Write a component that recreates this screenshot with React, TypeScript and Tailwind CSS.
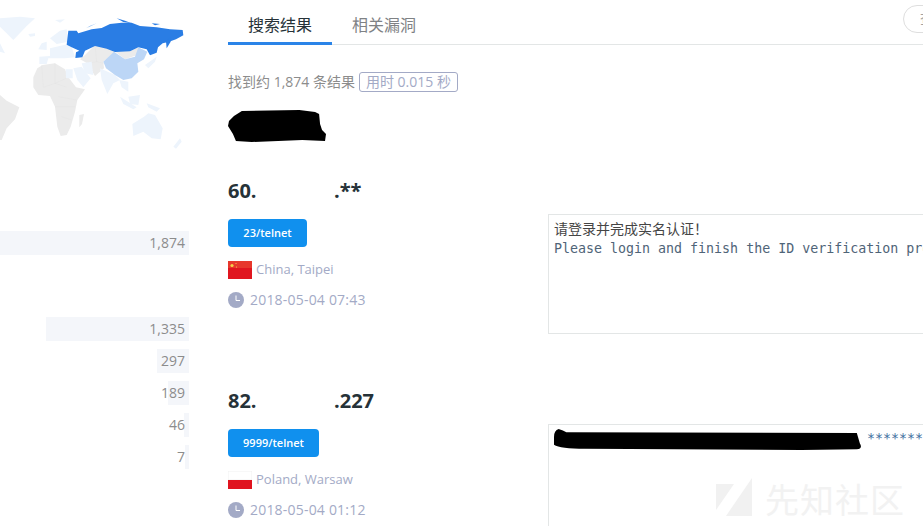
import React from "react";

const cjk = "font-['Open_Sans','Noto_Sans_CJK_SC',sans-serif]";

const bars = [
  { label: "1,335", width: "w-[143px]" },
  { label: "297", width: "w-[32px]" },
  { label: "189", width: "w-[21px]" },
  { label: "46", width: "w-[5px]" },
  { label: "7", width: "w-[4px]" },
];

function WorldMap() {
  return (
    <svg viewBox="0 0 660 480" className="block h-[160px] w-[220px]">
      {/* gray countries */}
      <g fill="#ebebeb">
        <path d="M100 232 L112 205 L128 195 L165 190 L195 208 L205 232 L228 262 L255 268 L232 300 L225 335 L212 380 L200 405 L182 408 L172 380 L165 320 L150 288 L115 285 L100 262 Z" />
        <path d="M0 285 L20 302 L58 322 L45 358 L20 385 L5 420 L0 420 Z" />
        <path d="M255 165 L285 135 L320 140 L345 155 L310 185 L312 205 L285 228 L262 190 L240 178 Z" />
        <path d="M342 152 L390 150 L415 142 L412 165 L375 178 Z" />
        <path d="M238 345 L252 342 L246 372 L238 382 Z" />
      </g>
      <g fill="none" stroke="#e0e0e0" strokeWidth="1">
        <path d="M125 195 L130 260 M165 190 L165 250 L200 262 M165 250 L130 262 M205 232 L165 250 M165 320 L225 320 M175 290 L230 300 M185 350 L215 360" />
        <path d="M285 135 L290 185 L262 190 M290 185 L312 190" />
      </g>
      {/* light countries */}
      <g fill="#edf4fc">
        <path d="M0 55 L60 50 L105 55 L80 78 L40 120 L20 100 L0 80 Z" />
        <path d="M85 102 L105 100 L105 108 L90 110 Z" />
        <path d="M165 60 L195 58 L180 68 Z" />
        <path d="M118 170 L150 168 L150 145 L205 132 L215 140 L225 172 L195 175 L145 175 L140 192 L118 192 Z" />
        <path d="M125 130 L140 125 L140 150 L115 148 Z" />
        <path d="M150 115 L180 92 L200 88 L205 125 L170 132 Z" />
        <path d="M197 208 L218 208 L218 235 L198 235 Z" />
        <path d="M220 205 L245 200 L272 235 L250 262 L232 240 Z" />
        <path d="M245 190 L275 185 L280 225 L255 220 Z" />
        <path d="M300 205 L345 225 L360 240 L340 250 L322 282 L305 240 Z" />
        <path d="M358 240 L385 245 L385 275 L365 262 Z" />
        <path d="M360 290 L410 322 L400 328 L370 312 Z" />
        <path d="M385 290 L420 285 L415 315 L390 312 Z" />
        <path d="M440 310 L480 325 L470 335 L445 322 Z" />
        <path d="M397 372 L432 350 L445 340 L465 345 L488 385 L482 418 L455 415 L430 395 L400 408 Z" />
        <path d="M520 440 L540 415 L545 425 L528 446 Z" />
        <path d="M435 195 L470 170 L465 185 L445 205 Z" />
        <path d="M0 130 L10 150 L15 160 L0 155 Z" />
      </g>
      {/* China */}
      <path
        fill="#bcd6f6"
        d="M310 185 L342 155 L375 178 L405 170 L415 142 L442 155 L432 178 L412 190 L415 215 L395 235 L370 240 L345 225 L318 205 Z"
      />
      {/* Russia */}
      <g fill="#2a7de4">
        <path d="M205 92 L230 92 L235 100 L275 88 L305 84 L330 72 L365 68 L395 68 L420 78 L470 82 L510 88 L548 90 L550 106 L528 118 L505 126 L488 130 L474 142 L470 158 L450 166 L440 148 L415 142 L390 154 L345 156 L320 146 L285 138 L255 152 L247 172 L226 174 L228 157 L238 152 L215 142 L200 134 Z" />
        <path d="M498 125 L510 112 L512 125 L500 145 Z" />
        <path d="M258 85 L290 70 L270 78 Z" />
        <path d="M350 55 L375 62 L395 70 L370 66 Z" />
        <path d="M455 70 L480 72 L465 76 Z" />
      </g>
    </svg>
  );
}

function Scribble({ d, className }: { d: string; className: string }) {
  return (
    <svg viewBox="0 0 100 32" preserveAspectRatio="none" className={className}>
      <path d={d} fill="#000" />
    </svg>
  );
}

function ClockIcon() {
  return (
    <svg viewBox="0 0 16 16" className="h-4 w-4 shrink-0">
      <circle cx="8" cy="8" r="8" fill="#a3aac6" />
      <path d="M8 3.5 V8.5 H12" fill="none" stroke="#fff" strokeWidth="1" />
    </svg>
  );
}

function FlagChina() {
  return (
    <svg viewBox="0 0 24 18" className="h-[18px] w-6 shrink-0">
      <rect width="24" height="18" fill="#e0161f" />
      <rect width="24" height="7" fill="#ee5a3a" opacity="0.5" />
      <circle cx="4" cy="4.5" r="1.6" fill="#f5d24a" />
      <circle cx="8" cy="2.5" r="0.6" fill="#f5d24a" />
      <circle cx="8.5" cy="6" r="0.6" fill="#f5d24a" />
    </svg>
  );
}

function FlagPoland() {
  return (
    <svg viewBox="0 0 24 18" className="h-[18px] w-6 shrink-0">
      <rect width="24" height="18" fill="#f1f1f1" />
      <rect x="0.5" y="0.5" width="23" height="8" fill="#fff" />
      <rect y="9" width="24" height="9" fill="#e0141f" />
    </svg>
  );
}

function ResultRow({
  head,
  tail,
  port,
  portWidth,
  flag,
  place,
  time,
  children,
}: {
  head: string;
  tail: string;
  port: string;
  portWidth: string;
  flag: React.ReactNode;
  place: string;
  time: string;
  children: React.ReactNode;
}) {
  return (
    <div className="flex h-[210px] shrink-0">
      <div className="w-[320px] shrink-0">
        <div className="flex h-[26px] items-center text-[20px] font-bold leading-[26px] text-[#263238]">
          <span className="w-[106px] shrink-0">{head}</span>
          <span>{tail}</span>
        </div>
        <div
          className={`mt-[15px] flex h-7 items-center justify-center rounded bg-[#1090ee] text-[11px] font-semibold text-white ${portWidth}`}
        >
          {port}
        </div>
        <div className="mt-[14px] flex h-[18px] items-center gap-1 text-[13px] text-[#a3aac6]">
          {flag}
          <span>{place}</span>
        </div>
        <div className="mt-[12px] flex h-[18px] items-center gap-1.5 text-sm tracking-[0.2px] text-[#a3aac6]">
          <ClockIcon />
          <span>{time}</span>
        </div>
      </div>
      <div className="mt-9 h-[120px] w-[500px] shrink-0 border border-[#e3e6e6] px-[5px] py-[4px]">{children}</div>
    </div>
  );
}

export default function App() {
  return (
    <div className={`relative flex h-[526px] w-[923px] overflow-hidden bg-white ${cjk}`}>
      <aside className="w-[228px] shrink-0">
        <WorldMap />
        <div className="mt-[71px] flex h-6 w-[189px] items-center justify-end bg-[#f4f6fa] pr-1 text-sm text-[#8c8c8c]">
          1,874
        </div>
        <div className="mt-[62px] flex w-[189px] flex-col gap-2">
          {bars.map((bar) => (
            <div key={bar.label} className="relative flex h-6 items-center justify-end pr-1 text-sm text-[#8c8c8c]">
              <div className={`absolute inset-y-0 right-0 bg-[#f4f6fa] ${bar.width}`} />
              <span className="relative">{bar.label}</span>
            </div>
          ))}
        </div>
      </aside>

      <main className="min-w-0 flex-1">
        <div className="relative flex h-[45px] border-b border-[#e3e6e6] text-base">
          <div className="flex h-[45px] w-[104px] items-center justify-center border-b-[3px] border-[#2a84e8] pt-2 text-[#263238]">
            搜索结果
          </div>
          <div className="flex h-[45px] w-[104px] items-center justify-center pt-[5px] text-[#7f8285]">相关漏洞</div>
          <div className="absolute left-[675px] top-[5px] flex h-7 w-[60px] items-center rounded-full border border-[#dedede] pl-4 text-sm text-[#a0a0a0]">
            查看
          </div>
        </div>

        <div className="mt-[27px] flex h-5 items-center text-sm text-[#8c8c8c]">
          <span>找到约 1,874 条结果</span>
          <span className="ml-1 flex h-5 w-[99px] items-center justify-center rounded-[3px] border border-[#a3aac6] text-sm text-[#a3aac6]">
            用时 0.015 秒
          </span>
        </div>

        <Scribble
          d="M1 11 L6 6 L14 1 L72 0 L88 2 L92 4 L93 14 L95 20 L99 24 L98 31 L75 30 L24 32 L8 31 L5 24 L0 16 Z"
          className="mt-[18px] h-8 w-[99px]"
        />

        <div className="mt-9">
          <ResultRow
            head="60."
            tail=".**"
            port="23/telnet"
            portWidth="w-[79px]"
            flag={<FlagChina />}
            place="China, Taipei"
            time="2018-05-04 07:43"
          >
            <div className="text-sm leading-[20px] text-[#454545]">请登录并完成实名认证！</div>
            <pre className="font-['DejaVu_Sans_Mono',monospace] text-[13.3px] leading-[20px] text-[#4f6478]">
              Please login and finish the ID verification process
            </pre>
          </ResultRow>
          <ResultRow
            head="82."
            tail=".227"
            port="9999/telnet"
            portWidth="w-[91px]"
            flag={<FlagPoland />}
            place="Poland, Warsaw"
            time="2018-05-04 01:12"
          >
            <div className="flex h-5 items-center">
              <Scribble
                d="M0 12 Q0 2 1.5 0 Q3 2 4 5 L98 6 L99 22 Q100 30 98 31 L80 32 L10 30 Q2 30 0 24 Z"
                className="h-[21px] w-[309px] shrink-0"
              />
              <span className="ml-1 font-['DejaVu_Sans_Mono',monospace] text-[13.3px] text-[#3c6e9e]">********</span>
            </div>
          </ResultRow>
        </div>
      </main>

      {/* watermark */}
      <div className="pointer-events-none absolute bottom-[4px] right-[18px] flex items-center gap-[13px]">
        <svg viewBox="0 0 36 44" className="h-11 w-9">
          <path d="M0 6 L18 6 L0 32 Z M36 0 L36 38 L10 38 Z" fill="#f1f1f1" />
        </svg>
        <span className="text-[34px] leading-none tracking-[1px] text-[#f2f2f2]">先知社区</span>
      </div>
    </div>
  );
}
